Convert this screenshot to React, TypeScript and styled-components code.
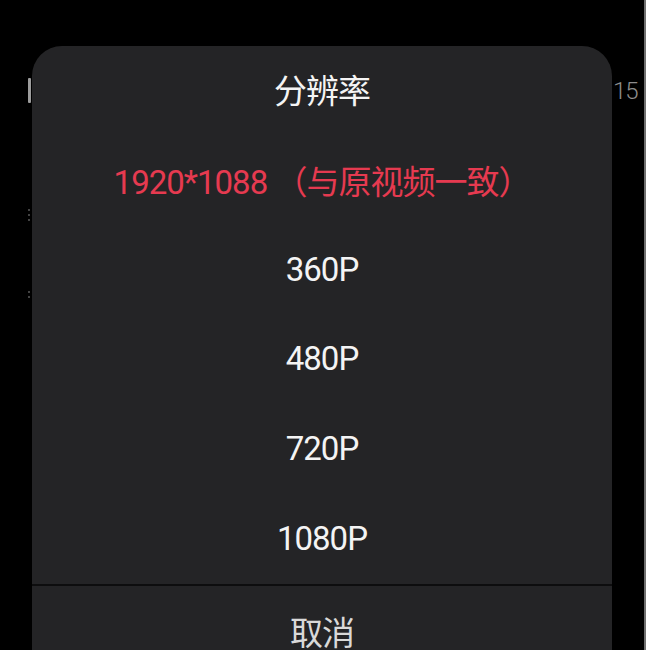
import React from "react";
import styled, { createGlobalStyle } from "styled-components";

const Global = createGlobalStyle`
  html, body { margin: 0; padding: 0; background: #000; }
  body { font-family: Roboto, "Noto Sans CJK SC", sans-serif; }
`;

const Screen = styled.div`
  display: flex;
  width: 646px;
  height: 650px;
  overflow: hidden;
  background: #000;
`;

const LeftGutter = styled.div`
  width: 32px;
  flex: none;
  display: flex;
  flex-direction: column;
  align-items: flex-end;
  padding-right: 1px;
  box-sizing: border-box;
`;

const ScrollBar = styled.div`
  width: 3px;
  height: 25px;
  margin-top: 78px;
  background: #9c9c9c;
  border-radius: 1px;
`;

const DotGroup = styled.div<{ $top: number }>`
  display: flex;
  flex-direction: column;
  gap: 3px;
  margin-top: ${(p) => p.$top}px;
  margin-right: 1px;
`;

const Dot = styled.span`
  display: block;
  width: 2px;
  height: 2px;
  border-radius: 1px;
  background: #5a5a5a;
`;

const Sheet = styled.div`
  width: 580px;
  flex: none;
  margin-top: 46px;
  background: #242426;
  border-radius: 30px 30px 0 0;
  display: flex;
  flex-direction: column;
  font-family: Roboto, "Noto Sans CJK SC", sans-serif;
  font-size: 33px;
  letter-spacing: -1px;
`;

const Title = styled.div`
  height: 90px;
  flex: none;
  display: flex;
  align-items: center;
  justify-content: center;
  padding-bottom: 4px;
  box-sizing: border-box;
  color: #f4f4f4;
`;

const Option = styled.div<{ $active?: boolean }>`
  height: 89.6px;
  flex: none;
  display: flex;
  align-items: center;
  justify-content: center;
  padding-bottom: 2px;
  box-sizing: border-box;
  color: ${(p) => (p.$active ? "#e63a50" : "#f4f4f4")};
  white-space: pre;
`;

const Divider = styled.div`
  height: 2px;
  flex: none;
  background: #0d0d0e;
`;

const Cancel = styled.div`
  height: 90px;
  flex: none;
  display: flex;
  align-items: center;
  justify-content: center;
  color: #d9d9d9;
`;

const RightGutter = styled.div`
  flex: 1;
  border-right: 2px solid #707070;
  padding-left: 1px;
  padding-top: 76px;
  box-sizing: border-box;
`;

const SideNumber = styled.div`
  font-family: Roboto, sans-serif;
  font-weight: 300;
  font-size: 24px;
  letter-spacing: -1px;
  color: #8c8c8c;
  line-height: 30px;
`;

const options = ["1920*1088 （与原视频一致）", "360P", "480P", "720P", "1080P"];

export default function App() {
  return (
    <>
      <Global />
      <Screen>
        <LeftGutter>
          <ScrollBar />
          <DotGroup $top={106}>
            <Dot />
            <Dot />
            <Dot />
          </DotGroup>
          <DotGroup $top={70}>
            <Dot />
            <Dot />
          </DotGroup>
        </LeftGutter>
        <Sheet>
          <Title>分辨率</Title>
          {options.map((o, i) => (
            <Option key={o} $active={i === 0}>
              {o}
            </Option>
          ))}
          <Divider />
          <Cancel>取消</Cancel>
        </Sheet>
        <RightGutter>
          <SideNumber>15</SideNumber>
        </RightGutter>
      </Screen>
    </>
  );
}
